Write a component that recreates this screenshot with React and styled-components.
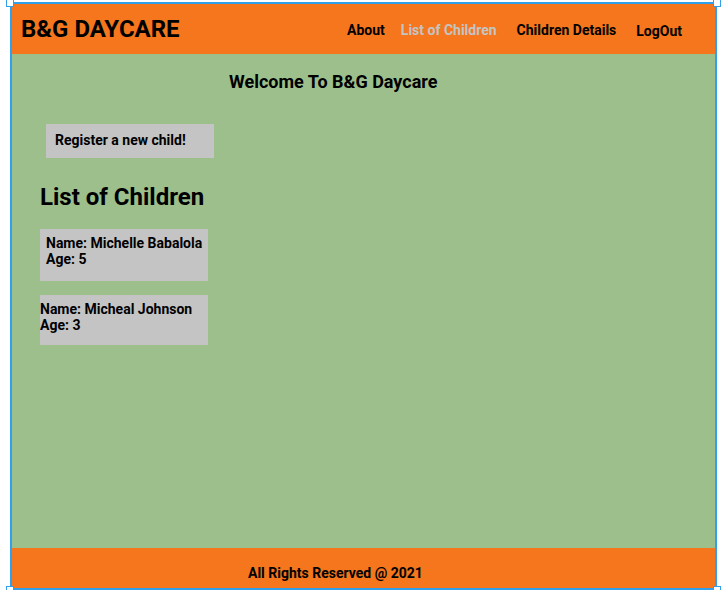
import React from "react";
import styled, { createGlobalStyle } from "styled-components";

const Global = createGlobalStyle`
    body {
        margin: 0;
        background: #ffffff;
        font-family: Roboto, "Liberation Sans", sans-serif;
    }
`
const Frame = styled.div`
    position: relative;
    display: flex;
    flex-direction: column;
    margin: 2px 0 0 10px;
    width: 703px;
    height: 584px;
    border: 2px solid #30a0ec;
`
const Handle = styled.span`
    position: absolute;
    z-index: 2;
    width: 6px;
    height: 6px;
    background: #ffffff;
    border: 1px solid #30a0ec;
    ${p => p.top ? "top: -5px;" : "bottom: -6px;"}
    ${p => p.left ? "left: -6px;" : "right: -6px;"}
`
const Head = styled.header`
    display: flex;
    align-items: center;
    height: 50px;
    padding: 0 33px 0 9px;
    background: #f5761c;
`
const Logo = styled.h1`
    margin: 0 0 1px;
    font-size: 24px;
    font-weight: 700;
    color: #000;
`
const Nav = styled.ul`
    display: flex;
    align-items: center;
    margin: 2px 0 0 auto;
    padding: 0;
    list-style: none;
`
const NavItem = styled.li`
    margin-left: ${p => p.gap || 0}px;
    margin-top: ${p => p.drop || 0}px;
    font-size: 14px;
    font-weight: 700;
    color: ${p => p.active ? "#c4c4c4" : "#000"};
    cursor: pointer;
`
const Main = styled.main`
    flex: 1;
    display: flex;
    flex-direction: column;
    align-items: flex-start;
    padding: 17px 0 0 28px;
    background: #9dbf8c;
`
const Welcome = styled.h3`
    margin: 0 0 32px 189px;
    font-size: 18px;
    font-weight: 700;
`
const RegisterBtn = styled.div`
    display: flex;
    align-items: center;
    box-sizing: border-box;
    width: 168px;
    height: 34px;
    margin-left: 6px;
    padding: 0 0 2px 9px;
    background: #c4c4c4;
    font-size: 14px;
    font-weight: 700;
`
const ListTitle = styled.h2`
    margin: 25px 0 18px;
    font-size: 24px;
    font-weight: 700;
`
const Card = styled.div`
    box-sizing: border-box;
    width: 168px;
    height: ${p => p.h}px;
    margin-bottom: 14px;
    padding: 6px 0 0 ${p => p.pad}px;
    background: #c4c4c4;
    font-size: 14px;
    font-weight: 700;
    line-height: 16px;
`
const Foot = styled.footer`
    display: flex;
    align-items: center;
    height: 40px;
    padding: 9px 0 0 236px;
    box-sizing: border-box;
    background: #f5761c;
    font-size: 14px;
    font-weight: 700;
`

const children = [
    { name: "Michelle Babalola", age: 5, pad: 6, h: 52 },
    { name: "Micheal Johnson", age: 3, pad: 0, h: 50 },
]

function App() {
    return (
        <>
            <Global />
            <Frame>
                <Handle top left />
                <Handle top />
                <Handle left />
                <Handle />
                <Head>
                    <Logo>B&amp;G DAYCARE</Logo>
                    <Nav>
                        <NavItem>About</NavItem>
                        <NavItem gap={16} active>List of Children</NavItem>
                        <NavItem gap={20}>Children Details</NavItem>
                        <NavItem gap={20} drop={2}>LogOut</NavItem>
                    </Nav>
                </Head>
                <Main>
                    <Welcome>Welcome To B&amp;G Daycare</Welcome>
                    <RegisterBtn>Register a new child!</RegisterBtn>
                    <ListTitle>List of Children</ListTitle>
                    {children.map(c => (
                        <Card key={c.name} pad={c.pad} h={c.h}>
                            Name: {c.name}<br />
                            Age: {c.age}
                        </Card>
                    ))}
                </Main>
                <Foot>All Rights Reserved @ 2021</Foot>
            </Frame>
        </>
    )
}

export default App;
